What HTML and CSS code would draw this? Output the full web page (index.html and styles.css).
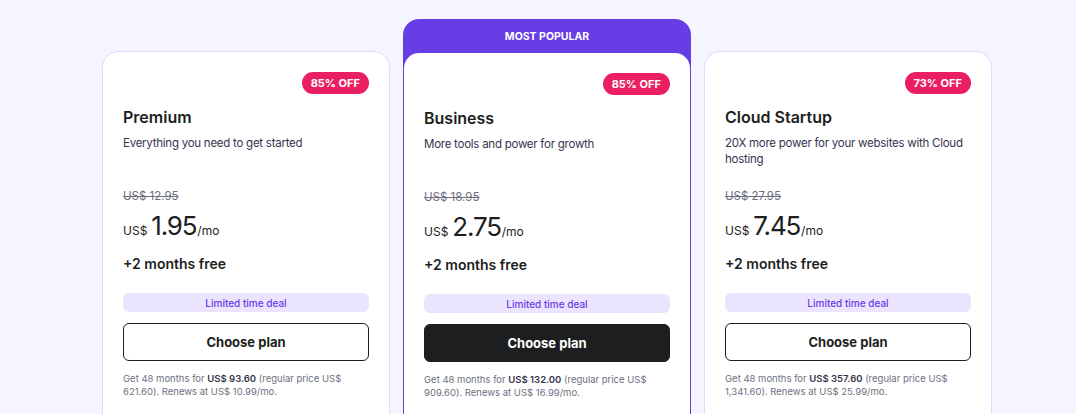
FILE: index.html
```html
<!DOCTYPE html>
<html lang="en">
<head>
<meta charset="utf-8">
<title>Pricing</title>
<link rel="stylesheet" href="styles.css">
</head>
<body>
<div class="plans">
  <div class="card">
    <div class="card-body">
      <div class="badge-row"><span class="badge">85% OFF</span></div>
      <h2 class="title">Premium</h2>
      <p class="desc">Everything you need to get started</p>
      <div class="old-price">US$ 12.95</div>
      <div class="price"><span class="cur">US$</span><span class="amount">1.95</span><span class="per">/mo</span></div>
      <div class="bonus">+2 months free</div>
      <div class="deal">Limited time deal</div>
      <button class="btn">Choose plan</button>
      <p class="fine"><span class="fine-line">Get 48 months for <b>US$ 93.60</b> (regular price US$</span><span class="fine-line">621.60). Renews at US$ 10.99/mo.</span></p>
    </div>
  </div>

  <div class="card card-popular">
    <div class="popular-label">MOST POPULAR</div>
    <div class="card-body">
      <div class="badge-row"><span class="badge">85% OFF</span></div>
      <h2 class="title">Business</h2>
      <p class="desc">More tools and power for growth</p>
      <div class="old-price">US$ 18.95</div>
      <div class="price"><span class="cur">US$</span><span class="amount">2.75</span><span class="per">/mo</span></div>
      <div class="bonus">+2 months free</div>
      <div class="deal">Limited time deal</div>
      <button class="btn btn-dark">Choose plan</button>
      <p class="fine"><span class="fine-line">Get 48 months for <b>US$ 132.00</b> (regular price US$</span><span class="fine-line">909.60). Renews at US$ 16.99/mo.</span></p>
    </div>
  </div>

  <div class="card">
    <div class="card-body">
      <div class="badge-row"><span class="badge">73% OFF</span></div>
      <h2 class="title">Cloud Startup</h2>
      <p class="desc">20X more power for your websites with Cloud hosting</p>
      <div class="old-price">US$ 27.95</div>
      <div class="price"><span class="cur">US$</span><span class="amount">7.45</span><span class="per">/mo</span></div>
      <div class="bonus">+2 months free</div>
      <div class="deal">Limited time deal</div>
      <button class="btn">Choose plan</button>
      <p class="fine"><span class="fine-line">Get 48 months for <b>US$ 357.60</b> (regular price US$</span><span class="fine-line">1,341.60). Renews at US$ 25.99/mo.</span></p>
    </div>
  </div>
</div>
</body>
</html>
```

FILE: styles.css
```css
* { box-sizing: border-box; }

html, body {
  margin: 0;
  padding: 0;
  background: #f4f5ff;
  overflow: hidden;
}

body {
  font-family: Inter, "Liberation Sans", sans-serif;
  color: #1d1e20;
  height: 414px;
}

.plans {
  display: flex;
  align-items: flex-start;
  gap: 13px;
  padding: 19px 0 0 102px;
}

.card {
  width: 288px;
  margin-top: 32px;
  background: #fff;
  border: 1px solid #dadefd;
  border-radius: 16px;
}

.card-popular {
  margin-top: 0;
  background: #673de6;
  border: none;
  padding: 0 1px;
}

.popular-label {
  height: 34px;
  display: flex;
  align-items: center;
  justify-content: center;
  color: #fff;
  font-size: 10.5px;
  font-weight: 700;
}

.card-popular .card-body {
  background: #fff;
  border-radius: 15px 15px 0 0;
}

.card-body {
  padding: 20px 20px 40px;
  min-height: 380px;
}

.badge-row {
  display: flex;
  justify-content: flex-end;
}

.badge {
  height: 22px;
  padding: 0 9px;
  border-radius: 11px;
  background: #ea1f62;
  color: #fff;
  font-size: 11px;
  font-weight: 700;
  display: flex;
  align-items: center;
}

.title {
  margin: 11px 0 0;
  font-size: 16px;
  line-height: 24px;
  font-weight: 600;
}

.desc {
  margin: 6px 0 0;
  font-size: 11.5px;
  line-height: 16px;
  letter-spacing: -0.25px;
  min-height: 32px;
  color: #36344d;
}

.old-price {
  margin-top: 21px;
  font-size: 11.5px;
  line-height: 16px;
  color: #6d7081;
  text-decoration: line-through;
}

.price {
  margin-top: 3px;
  height: 36px;
  display: flex;
  align-items: baseline;
  color: #1d1e20;
}

.cur {
  font-size: 12px;
  margin-right: 4px;
}

.amount {
  font-size: 26px;
  line-height: 37px;
  font-weight: 400;
  letter-spacing: -1.2px;
}

.per {
  font-size: 12px;
  margin-left: 1px;
}

.bonus {
  margin-top: 10px;
  font-size: 14px;
  line-height: 22px;
  font-weight: 600;
}

.deal {
  margin-top: 18px;
  height: 19px;
  border-radius: 6px;
  background: #ebe4ff;
  color: #673de6;
  font-size: 10px;
  font-weight: 500;
  display: flex;
  align-items: center;
  justify-content: center;
}

.btn {
  display: block;
  width: 100%;
  margin-top: 11px;
  height: 38px;
  border: 1px solid #1d1e20;
  border-radius: 6px;
  background: #fff;
  color: #1d1e20;
  font-family: inherit;
  font-size: 13px;
  font-weight: 700;
  cursor: pointer;
}

.btn-dark {
  background: #1d1e20;
  color: #fff;
}

.fine {
  margin: 12px 0 0;
  font-size: 9.5px;
  line-height: 12.5px;
  color: #6d7081;
}

.fine-line {
  display: block;
  white-space: nowrap;
}

.fine b {
  color: #36344d;
  font-weight: 600;
}
```
